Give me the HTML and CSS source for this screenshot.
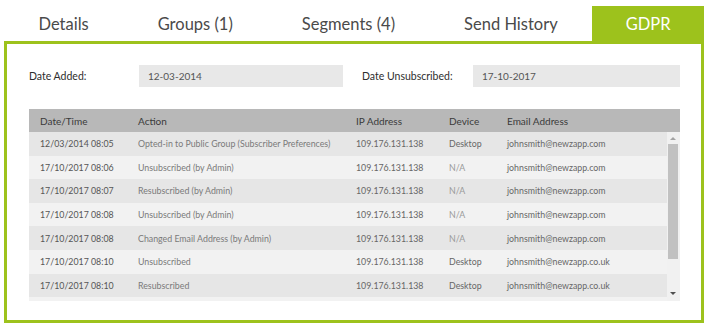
FILE: index.html
```html
<!DOCTYPE html>
<html>
<head>
<meta charset="utf-8">
<link rel="stylesheet" href="styles.css">
</head>
<body>
<div class="wrap">
  <nav class="tabs">
    <div class="tab">Details</div>
    <div class="tab">Groups (1)</div>
    <div class="tab">Segments (4)</div>
    <div class="tab">Send History</div>
    <div class="tab active">GDPR</div>
  </nav>
  <section class="panel">
    <div class="dates">
      <div class="field first">
        <span class="label">Date Added:</span>
        <span class="value">12-03-2014</span>
      </div>
      <div class="field">
        <span class="label wide">Date Unsubscribed:</span>
        <span class="value">17-10-2017</span>
      </div>
    </div>
    <div class="table">
      <div class="row head">
        <span>Date/Time</span><span>Action</span><span>IP Address</span><span>Device</span><span>Email Address</span>
      </div>
      <div class="body">
        <div class="rows">
          <div class="row"><span class="dt">12/03/2014 08:05</span><span class="act">Opted-in to Public Group (Subscriber Preferences)</span><span class="ip">109.176.131.138</span><span class="dev">Desktop</span><span class="em">johnsmith@newzapp.com</span></div>
          <div class="row"><span class="dt">17/10/2017 08:06</span><span class="act">Unsubscribed (by Admin)</span><span class="ip">109.176.131.138</span><span class="dev na">N/A</span><span class="em">johnsmith@newzapp.com</span></div>
          <div class="row"><span class="dt">17/10/2017 08:07</span><span class="act">Resubscribed (by Admin)</span><span class="ip">109.176.131.138</span><span class="dev na">N/A</span><span class="em">johnsmith@newzapp.com</span></div>
          <div class="row"><span class="dt">17/10/2017 08:08</span><span class="act">Unsubscribed (by Admin)</span><span class="ip">109.176.131.138</span><span class="dev na">N/A</span><span class="em">johnsmith@newzapp.com</span></div>
          <div class="row"><span class="dt">17/10/2017 08:08</span><span class="act">Changed Email Address (by Admin)</span><span class="ip">109.176.131.138</span><span class="dev na">N/A</span><span class="em">johnsmith@newzapp.com</span></div>
          <div class="row"><span class="dt">17/10/2017 08:10</span><span class="act">Unsubscribed</span><span class="ip">109.176.131.138</span><span class="dev">Desktop</span><span class="em">johnsmith@newzapp.co.uk</span></div>
          <div class="row"><span class="dt">17/10/2017 08:10</span><span class="act">Resubscribed</span><span class="ip">109.176.131.138</span><span class="dev">Desktop</span><span class="em">johnsmith@newzapp.co.uk</span></div>
          <div class="row"></div>
        </div>
        <div class="scrollbar">
          <div class="arrow up"></div>
          <div class="thumb"></div>
          <div class="arrow down"></div>
        </div>
      </div>
    </div>
  </section>
</div>
</body>
</html>
```

FILE: styles.css
```css
* { box-sizing: border-box; }
html, body { margin: 0; padding: 0; background: #fff; }
body { font-family: Lato, "Open Sans", sans-serif; }

.wrap { padding: 6px 0 0 4px; width: 704px; }

.tabs { display: flex; height: 35px; }
.tab {
  padding: 1px 34.5px 0;
  display: flex; align-items: center;
  font-size: 16.5px; color: #4a4a4a;
}
.tab.active { background: #9dc21c; color: #fff; flex: 1; justify-content: center; padding: 1px 0 0; }

.panel {
  border: 3px solid #9dc21c;
  height: 282px;
  padding: 21px 21px 0 22px;
}

.dates { display: flex; gap: 19px; }
.field { flex: 1; display: flex; align-items: center; }
.field.first { flex: 0 0 314px; }
.label { width: 110px; font-size: 10.5px; color: #2e2e2e; }
.label.wide { width: 111px; }
.value {
  flex: 1; height: 22px; background: #e8e8e8;
  font-size: 10px; color: #555; padding-left: 9px;
  display: flex; align-items: center;
}

.table { margin-top: 22px; }
.row {
  display: grid;
  grid-template-columns: 98px 218px 93px 58px 1fr;
  height: 23.6px; align-items: center;
  font-size: 8.8px;
}
.row span { padding-left: 11px; white-space: nowrap; }
.row.head { background: #b8b8b8; height: 23px; font-size: 10px; color: #3a3a3a; }

.body { display: flex; height: 169px; }
.rows { flex: 1; overflow: hidden; }
.rows .row:nth-child(odd) { background: #e6e6e6; }
.rows .row:nth-child(even) { background: #f2f2f2; }
.dt { color: #555; }
.act { color: #7a7a7a; }
.ip { color: #666; }
.dev { color: #666; }
.dev.na { color: #999; }
.em { color: #666; }

.scrollbar {
  width: 13px; background: #f1f1f1;
  display: flex; flex-direction: column; align-items: center;
  padding: 0 2px 0 1px;
}
.arrow { width: 0; height: 0; border-left: 3px solid transparent; border-right: 3px solid transparent; }
.arrow.up { border-bottom: 3px solid #a3a3a3; margin: 5px 0 4px; }
.arrow.down { border-top: 3px solid #505050; margin: auto 0 6px; }
.thumb { width: 10px; height: 115px; background: #c1c1c1; }
```
